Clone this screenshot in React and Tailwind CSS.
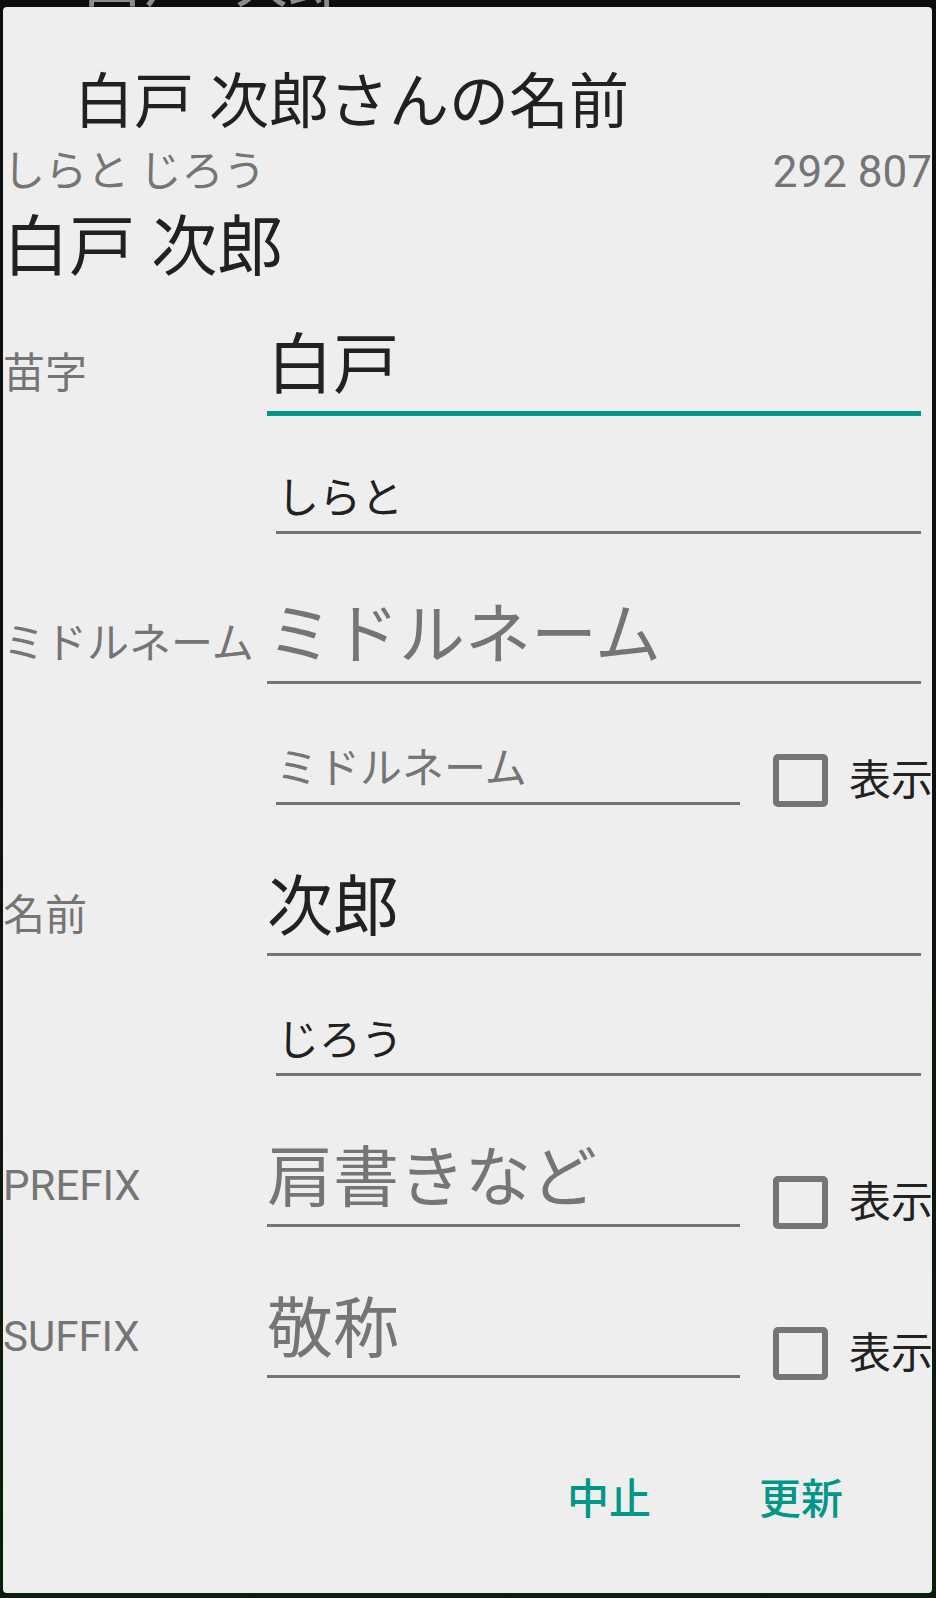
const FONT = "font-[family-name:Roboto,'Noto_Sans_CJK_JP',sans-serif]";

function ShowCheck({ className }) {
  return (
    <div className={`flex items-center h-[53px] gap-[21px] ${className}`}>
      <span className="block w-[55px] h-[53px] shrink-0 rounded-[5px] border-[6px] border-[#757575]" />
      <span className="text-[42px] leading-[53px] text-[#212121] whitespace-nowrap">表示</span>
    </div>
  );
}

export default function App() {
  return (
    <div className={`relative w-[936px] h-[1598px] overflow-hidden bg-linear-to-b from-[#0e0e0e] via-[#101010] to-[#0a1f0a] ${FONT}`}>
      {/* page behind the dialog */}
      <div className="-mt-[52px] pl-[80px] text-[64px] leading-[64px] text-[#8c8c8c]">白戸 次郎</div>

      {/* ================= DIALOG ================= */}
      <div className="absolute left-[3px] top-[7px] w-[929px] h-[1586px] rounded-[4px] bg-[#eeeeee] overflow-hidden">
        {/* header */}
        <div className="pt-[56px] pl-[71px] text-[60px] leading-[80px] text-[#212121] whitespace-nowrap">
          白戸 次郎さんの名前
        </div>
        <div className="mt-[4px] flex items-center justify-between h-[50px] text-[#757575]">
          <span className="text-[42px] leading-[50px]">しらと じろう</span>
          <span className="text-[44px] leading-[50px]">292 807</span>
        </div>
        <div className="mt-[11px] text-[66px] leading-[80px] text-[#212121]">白戸 次郎</div>

        {/* 苗字 */}
        <div className="flex mt-[38px] mr-[11px]">
          <div className="w-[264px] shrink-0 pt-[18px] text-[42px] leading-[60px] text-[#757575]">苗字</div>
          <div className="flex-1 pb-[5px] text-[66px] leading-[80px] text-[#212121] border-b-[5px] border-[#009688]">
            白戸
          </div>
        </div>
        <div className="ml-[273px] mr-[11px] mt-[53px] pl-[1px] pb-[2px] border-b-[3px] border-[#737373] text-[42px] leading-[60px] text-[#212121]">
          しらと
        </div>

        {/* ミドルネーム */}
        <div className="flex mt-[62px] mr-[11px]">
          <div className="w-[264px] shrink-0 pt-[18px] text-[42px] leading-[60px] text-[#757575] whitespace-nowrap">
            ミドルネーム
          </div>
          <div className="flex-1 pb-[5px] text-[66px] leading-[80px] text-[#757575] border-b-[3px] border-[#737373] whitespace-nowrap">
            ミドルネーム
          </div>
        </div>
        <div className="flex items-start ml-[273px] mt-[55px]">
          <div className="w-[464px] shrink-0 pb-[3px] border-b-[3px] border-[#737373] text-[42px] leading-[60px] text-[#757575]">
            ミドルネーム
          </div>
          <ShowCheck className="ml-[33px] mt-[15px]" />
        </div>

        {/* 名前 */}
        <div className="flex mt-[61px] mr-[11px]">
          <div className="w-[264px] shrink-0 pt-[18px] text-[42px] leading-[60px] text-[#757575]">名前</div>
          <div className="flex-1 pb-[5px] text-[66px] leading-[80px] text-[#212121] border-b-[3px] border-[#737373]">
            次郎
          </div>
        </div>
        <div className="ml-[273px] mr-[11px] mt-[55px] pl-[1px] pb-[2px] border-b-[3px] border-[#737373] text-[42px] leading-[60px] text-[#212121]">
          じろう
        </div>

        {/* PREFIX */}
        <div className="flex items-start mt-[63px]">
          <div className="w-[264px] shrink-0 pt-[17px] text-[42px] leading-[60px] text-[#757575]">PREFIX</div>
          <div className="w-[473px] shrink-0 pb-[5px] text-[66px] leading-[80px] text-[#757575] border-b-[3px] border-[#737373] whitespace-nowrap">
            肩書きなど
          </div>
          <ShowCheck className="ml-[33px] mt-[37px]" />
        </div>

        {/* SUFFIX */}
        <div className="flex items-start mt-[61px]">
          <div className="w-[264px] shrink-0 pt-[17px] text-[42px] leading-[60px] text-[#757575]">SUFFIX</div>
          <div className="w-[473px] shrink-0 pb-[5px] text-[66px] leading-[80px] text-[#757575] border-b-[3px] border-[#737373]">
            敬称
          </div>
          <ShowCheck className="ml-[33px] mt-[37px]" />
        </div>

        {/* buttons */}
        <div className="flex justify-end gap-[24px] pr-[47px] mt-[90px]">
          <button className="w-[168px] text-center text-[42px] leading-[60px] font-medium text-[#009688]">中止</button>
          <button className="w-[168px] text-center text-[42px] leading-[60px] font-medium text-[#009688]">更新</button>
        </div>
      </div>
    </div>
  );
}
